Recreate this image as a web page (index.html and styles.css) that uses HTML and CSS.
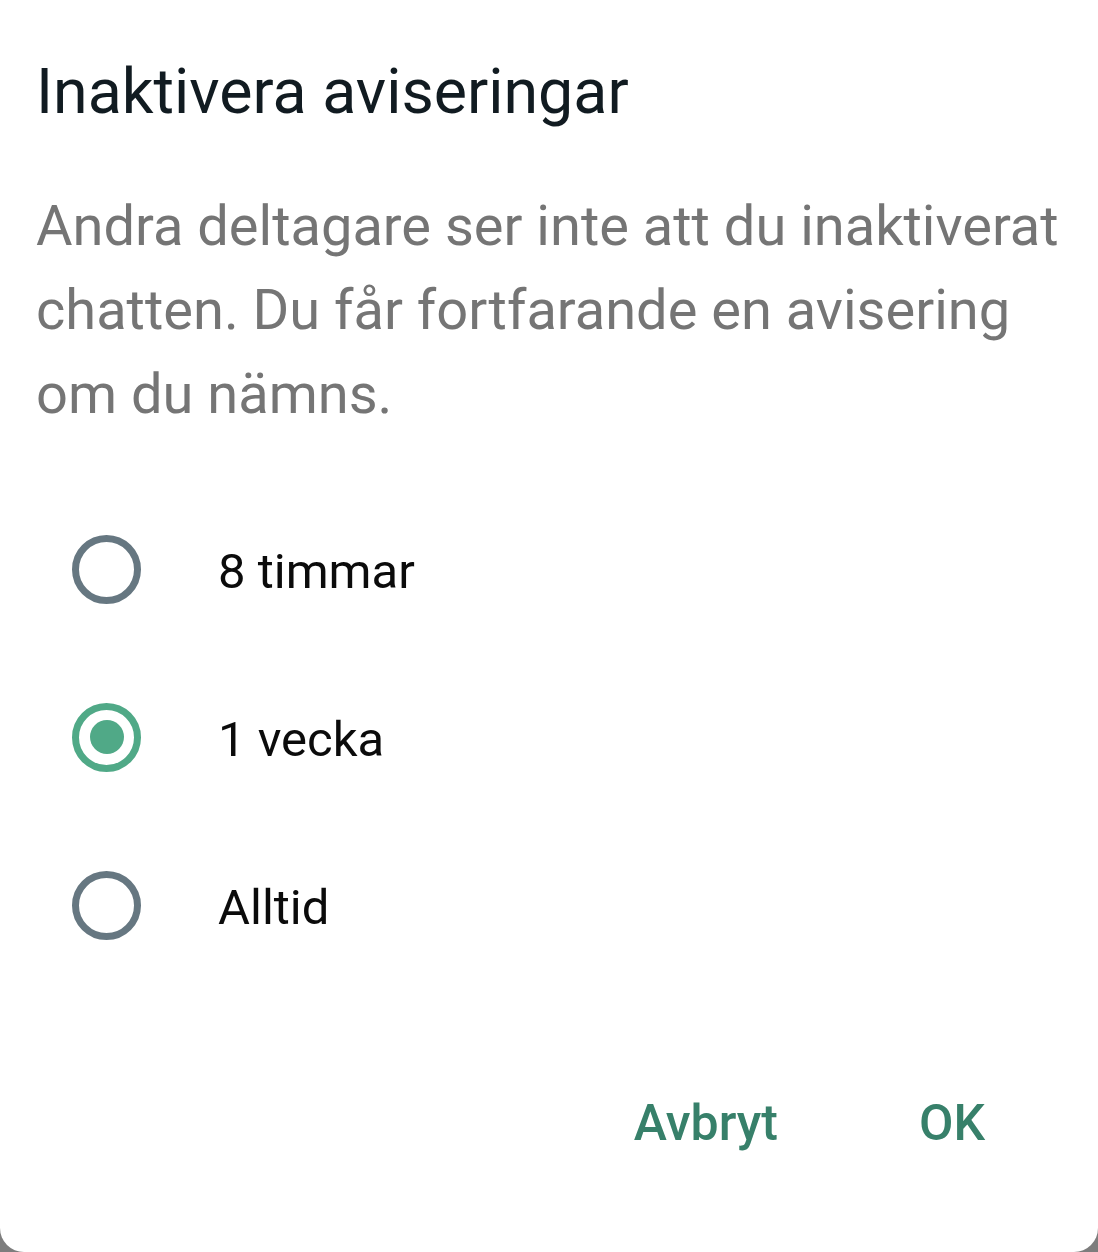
FILE: index.html
```html
<!DOCTYPE html>
<html lang="sv">
<head>
    <meta charset="UTF-8">
    <meta name="viewport" content="width=device-width, initial-scale=1.0">
    <title>Inaktivera aviseringar</title>
    <link rel="stylesheet" href="styles.css">
</head>
<body>
    <div class="dialog">
        <h1 class="dialog-title">Inaktivera aviseringar</h1>

        <p class="dialog-text">Andra deltagare ser inte att du inaktiverat<br>chatten. Du får fortfarande en avisering<br>om du nämns.</p>

        <!-- Options -->
        <div class="options">
            <label class="option">
                <span class="radio"></span>
                <span class="option-label">8 timmar</span>
            </label>
            <label class="option">
                <span class="radio checked"></span>
                <span class="option-label">1 vecka</span>
            </label>
            <label class="option">
                <span class="radio"></span>
                <span class="option-label">Alltid</span>
            </label>
        </div>

        <!-- Actions -->
        <div class="actions">
            <button class="action">Avbryt</button>
            <button class="action">OK</button>
        </div>
    </div>
</body>
</html>
```

FILE: styles.css
```css
body {
    margin: 0;
    padding: 0;
    background-color: #7d7d7d;
    font-family: Roboto, "Noto Sans", Arial, sans-serif;
}
.dialog {
    box-sizing: border-box;
    width: 1098px;
    height: 1252px;
    padding: 52px 0 0 36px;
    background-color: white;
    border-radius: 0 0 24px 24px;
}
.dialog-title {
    margin: 0;
    font-size: 62.7px;
    font-weight: 400;
    line-height: 80px;
    color: #111b21;
}
.dialog-text {
    margin: 52px 0 0 0;
    font-size: 56px;
    line-height: 84px;
    color: #757575;
    white-space: nowrap;
}
.options {
    margin-top: 49px;
}
.option {
    display: flex;
    align-items: center;
    height: 168px;
    padding-left: 36px;
}
.radio {
    box-sizing: border-box;
    width: 69px;
    height: 69px;
    border: 7px solid #667781;
    border-radius: 50%;
    display: flex;
    align-items: center;
    justify-content: center;
    flex-shrink: 0;
}
.radio.checked {
    border-color: #50a987;
}
.radio.checked::after {
    content: "";
    width: 34px;
    height: 34px;
    border-radius: 50%;
    background-color: #50a987;
}
.option-label {
    margin: 4px 0 0 77px;
    font-size: 49px;
    color: #0b0b0b;
}
.actions {
    display: flex;
    justify-content: flex-end;
    gap: 69px;
    margin-top: 84px;
    padding-right: 77px;
}
.action {
    height: 100px;
    padding: 0 36px;
    border: none;
    background: none;
    font-family: Roboto, "Noto Sans", Arial, sans-serif;
    font-size: 50px;
    font-weight: 500;
    color: #37806a;
    cursor: pointer;
}
```
